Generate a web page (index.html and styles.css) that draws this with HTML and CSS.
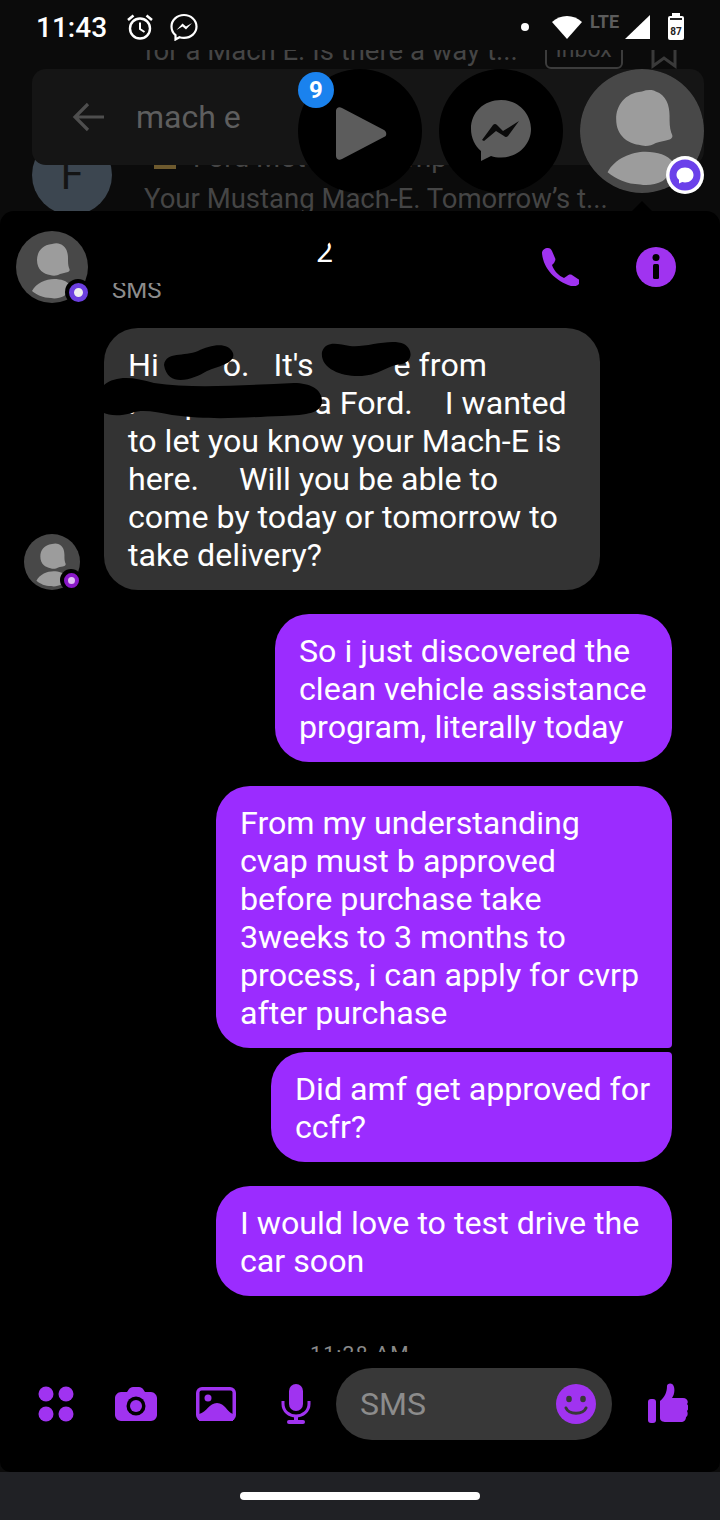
FILE: index.html
```html
<!DOCTYPE html>
<html>
<head>
	<title></title>
	<meta charset="utf-8">
	<link rel="stylesheet" href="styles.css">
</head>
<body>
    <svg class="defs" width="0" height="0">
        <symbol id="person" viewBox="0 0 72 72">
            <circle cx="36" cy="36" r="36" fill="#484848"/>
            <path d="M36 13c3-1 6-1 8 0 6 2 8 8 8 14 0 4 0 7 1 10 1 2 1 3-1 4-3 1-5 1-8 2-3 2-7 2-10 1-6-1-13-5-13-15 0-8 5-15 15-16z" fill="#9c9c9c"/>
            <path d="M16 60c4-8 14-12 22-12 7 0 13 2 16 6-1 5-3 9-6 11-4 2-9 3-13 2-8 0-14-3-19-7z" fill="#9c9c9c"/>
        </symbol>
    </svg>

    <div class="status-bar">
        <span class="clock">11:43</span>
        <svg class="st-icon alarm" viewBox="0 0 28 28" fill="none" stroke="#fff" stroke-width="2.4">
            <circle cx="14" cy="15.5" r="10"/>
            <path d="M14 9.5v6.5l4.500 3" stroke-width="2"/>
            <path d="M2 7l5.500-4.500M26 7l-5.500-4.500" stroke-width="2.600"/>
        </svg>
        <svg class="st-icon fb-small" viewBox="0 0 28 28">
            <path d="M14 2C7 2 1.500 7 1.500 13.600c0 3.500 1.500 6.500 4 8.600V26.500l4-2.200c1.400.4 2.900.6 4.500.6 7 0 12.500-5 12.500-11.300S21 2 14 2z" fill="none" stroke="#fff" stroke-width="2.200"/>
            <path d="M6.500 17l6-6.500 3.500 3 6-3.500-6 6.500-3.500-3z" fill="#fff"/>
        </svg>
        <span class="spacer"></span>
        <span class="dot"></span>
        <svg class="wifi" viewBox="0 0 30 26"><path d="M15 25L0 8C8 0 22 0 30 8z" fill="#fff"/></svg>
        <span class="lte">LTE</span>
        <svg class="signal" viewBox="0 0 25 24"><path d="M25 0v24H0z" fill="#fff"/></svg>
        <span class="battery"><span class="battery-cap"></span><span class="battery-line"></span><span class="battery-num">87</span></span>
    </div>

    <div class="backdrop">
        <div class="bg-row-top">
            <span>for a Mach E. Is there a way t...</span>
            <span class="inbox-chip">Inbox</span>
            <svg class="bookmark" viewBox="0 0 26 30" fill="none" stroke="#3a3a3a" stroke-width="3"><path d="M2 2h22v25l-11-8-11 8z"/></svg>
        </div>
        <div class="search-card">
            <svg class="back-arrow" viewBox="0 0 32 30" fill="none" stroke="#4e4e4e" stroke-width="3.200"><path d="M32 15H3M16 2L3 15l13 13"/></svg>
            <span class="search-text">mach e</span>
        </div>
        <div class="bg-row-bottom">
            <div class="f-avatar">F</div>
            <div class="bg-text">
                <div class="bg-title"><span class="bg-mark"></span>Ford Motor      Comp</div>
                <div class="bg-preview">Your Mustang Mach-E. Tomorrow’s t...</div>
            </div>
        </div>

        <!-- chat heads float over the search results -->
        <div class="chat-head play-head">
            <svg viewBox="0 0 52 53"><path d="M1 4c0-3 3-5 6-3l42 22c3 2 3 6 0 7L7 52c-3 2-6 0-6-3z" fill="#5c5c5c"/></svg>
        </div>
        <div class="chat-badge">9</div>
        <div class="chat-head fb-head">
            <svg viewBox="0 0 62 62">
                <path d="M31 0C14 0 1 12 1 29c0 9 4 17 10 22v10l10-5c3 1 6 1.500 10 1.500 17 0 30-13 30-28.500S48 0 31 0z" fill="#5c5c5c"/>
                <path d="M12 40L23 25q2-2 4 0l6 6 16-10-11 15q-2 2-4 0l-8-5-12 10z" fill="#0a0a0a"/>
            </svg>
        </div>
        <div class="chat-head person-head">
            <svg viewBox="0 0 72 72"><use href="#person"/></svg>
            <svg class="head-badge" viewBox="0 0 38 38">
                <circle cx="19" cy="19" r="19" fill="#fff"/>
                <circle cx="19" cy="19" r="15.500" fill="#6b41ea"/>
                <path d="M19 11.500c5 0 8.500 3.300 8.500 7.500s-3.500 7.500-8.500 7.500c-1 0-2 0-2.800-.4L13 27.500v-3.700c-1.600-1.300-2.500-3-2.500-4.800 0-4.200 3.500-7.500 8.500-7.500z" fill="#fff"/>
            </svg>
        </div>
        <div class="pointer"></div>
    </div>

    <div class="panel">
        <div class="thread-header">
            <div class="avatar-wrap">
                <svg class="avatar-big" viewBox="0 0 72 72"><use href="#person"/></svg>
                <span class="sms-badge"><span class="sms-badge-dot"></span></span>
            </div>
            <div class="thread-title">
                <div class="thread-name"><span class="name-left">2</span></div>
                <div class="thread-sub"><span>SMS</span></div>
            </div>
            <svg class="hd-icon phone" viewBox="0 0 38 38">
                <path d="M1 5c0-3 3-5 6-5 2 0 3 1 4 3l3 7c1 2 0 3-1 5l-2 2c2 6 7 11 12 13l3-2c1-1 3-2 5-1l6 4c2 1 2 3 1 5-2 2-5 3-8 2C14 33 2 20 1 5z" fill="#a033f0"/>
            </svg>
            <svg class="hd-icon info" viewBox="0 0 40 40">
                <circle cx="20" cy="20" r="20" fill="#a033f0"/>
                <circle cx="20" cy="10.500" r="3.500" fill="#000"/>
                <rect x="17" y="17" width="6" height="15" rx="1.500" fill="#000"/>
            </svg>
        </div>

        <div class="message-list">
            <div class="row-in">
                <div class="small-avatar">
                    <svg viewBox="0 0 72 72"><use href="#person"/></svg>
                    <span class="mini-badge"><span class="mini-badge-dot"></span></span>
                </div>
                <div class="bubble bubble-in">
                    <div class="bubble-text">Hi        o.   It's          e from
.      p              a Ford.    I wanted
to let you know your Mach-E is
here.     Will you be able to
come by today or tomorrow to
take delivery?</div>
                    <svg class="scribble scribble-a" viewBox="0 0 72 40"><path d="M2 22C4 8 22 14 36 8 48 2 66-2 71 10c3 10-14 13-26 18C32 36 6 46 2 22z" fill="#000"/></svg>
                    <svg class="scribble scribble-b" viewBox="0 0 92 36"><path d="M2 10c4-12 16-8 28-6 16 2 40-8 54-2 10 6 8 18-2 20-18 2-22 12-44 12C20 34 0 26 2 10z" fill="#000"/></svg>
                    <svg class="scribble scribble-c" viewBox="0 0 218 42"><path d="M0 8C12-2 30 0 50 6c40 6 90 2 140 0 16 0 28 6 28 18 0 12-14 14-40 15-50 2-70 4-110-1-16-3-30-6-40-2C14 40 4 38 0 36z" fill="#000"/></svg>
                </div>
            </div>

            <div class="bubble bubble-out w-first">So i just discovered the
clean vehicle assistance
program, literally today</div>
            <div class="bubble bubble-out w-full group-top">From my understanding
cvap must b approved
before purchase take
3weeks to 3 months to
process, i can apply for cvrp
after purchase</div>
            <div class="bubble bubble-out w-third group-bottom">Did amf get approved for
ccfr?</div>
            <div class="bubble bubble-out w-full">I would love to test drive the
car soon</div>
            <div class="timestamp">11:28 AM</div>
        </div>

        <div class="composer">
            <div class="tool">
                <svg class="apps" viewBox="0 0 36 36" fill="#a033f0"><circle cx="8" cy="8" r="7.500"/><circle cx="28" cy="8" r="7.500"/><circle cx="8" cy="28" r="7.500"/><circle cx="28" cy="28" r="7.500"/></svg>
            </div>
            <div class="tool">
                <svg class="camera" viewBox="0 0 42 34"><path d="M6 5h6l2-3c1-1 2-2 4-2h6c2 0 3 1 4 2l2 3h6c3 0 6 3 6 6v17c0 3-3 6-6 6H6c-3 0-6-3-6-6V11c0-3 3-6 6-6z" fill="#a033f0"/><circle cx="21" cy="19" r="9.500" fill="#000"/><circle cx="21" cy="19" r="6" fill="#a033f0"/></svg>
            </div>
            <div class="tool">
                <svg class="picture" viewBox="0 0 40 34"><rect width="40" height="34" rx="6" fill="#a033f0"/><rect x="3.500" y="3.500" width="33" height="27" rx="2" fill="#000"/><circle cx="12" cy="11" r="3.500" fill="#a033f0"/><path d="M3 27c8-2 10-11 18-11s10 9 16 11v7H3z" fill="#a033f0"/></svg>
            </div>
            <div class="tool">
                <svg class="mic" viewBox="0 0 30 40"><rect x="8" y="0" width="14" height="27" rx="7" fill="#a033f0"/><path d="M2 17v3c0 7 6 12 13 12s13-5 13-12v-3" fill="none" stroke="#a033f0" stroke-width="3"/><rect x="13" y="31" width="4" height="7" fill="#a033f0"/><rect x="6" y="36" width="18" height="4" rx="2" fill="#a033f0"/></svg>
            </div>
            <div class="input-pill">
                <span class="input-text">SMS</span>
                <svg class="smile" viewBox="0 0 40 40"><circle cx="20" cy="20" r="20" fill="#a033f0"/><ellipse cx="13" cy="15" rx="2.800" ry="3.200" fill="#383838"/><ellipse cx="27" cy="15" rx="2.800" ry="3.200" fill="#383838"/><path d="M10 24c3 7 17 7 20 0" fill="none" stroke="#383838" stroke-width="3" stroke-linecap="round"/></svg>
            </div>
            <svg class="thumb" viewBox="0 0 40 40"><rect x="0" y="16" width="8" height="24" rx="3" fill="#a033f0"/><path d="M12 18c5-4 7-9 7-15 0-3 6-4 7 1 1 4 0 8-2 11h11c4 0 6 4 4 6 2 2 2 5 0 7 1 2 1 5-1 6 0 3-2 5-5 5H18c-3 0-6-1-6-4z" fill="#a033f0"/></svg>
        </div>
    </div>

    <div class="nav-bar"><span class="nav-pill"></span></div>
</body>
</html>
```

FILE: styles.css
```css
* {
    box-sizing: border-box;
}
body {
    margin: 0;
    width: 720px;
    height: 1520px;
    background-color: #0b0b0b;
    display: flex;
    flex-direction: column;
    overflow: hidden;
    font-family: Roboto, "Liberation Sans", sans-serif;
    color: #fff;
}
.defs {
    position: absolute;
}

/* status bar */
.status-bar {
    height: 50px;
    flex: none;
    display: flex;
    align-items: center;
    padding: 4px 36px 0 36px;
}
.clock {
    font-size: 28px;
    font-weight: 500;
    width: 90px;
}
.st-icon {
    width: 28px;
    height: 28px;
}
.fb-small {
    margin-left: 16px;
}
.spacer {
    flex: 1;
}
.dot {
    width: 8px;
    height: 8px;
    border-radius: 50%;
    background-color: #fff;
}
.wifi {
    width: 30px;
    height: 26px;
    margin-left: 23px;
}
.lte {
    font-size: 18px;
    font-weight: 700;
    color: #5c5c5c;
    width: 34px;
    margin: -12px 0 0 8px;
}
.signal {
    width: 25px;
    height: 24px;
    margin-left: 1px;
}
.battery {
    position: relative;
    width: 16px;
    height: 24px;
    margin: 2px 0 0 18px;
    background-color: #fff;
    border-radius: 2px;
    display: flex;
    align-items: flex-end;
    justify-content: center;
}
.battery-cap {
    position: absolute;
    top: -3px;
    left: 4px;
    width: 8px;
    height: 3px;
    background-color: #fff;
}
.battery-line {
    position: absolute;
    top: 2px;
    left: 2px;
    right: 2px;
    height: 2px;
    background-color: #222;
}
.battery-num {
    font-size: 10px;
    font-weight: 700;
    color: #222;
    line-height: 17px;
}

/* dimmed screen behind the bubble */
.backdrop {
    position: relative;
    height: 161px;
    flex: none;
    overflow: hidden;
    color: #454545;
}
.bg-row-top {
    height: 19px;
    display: flex;
    align-items: flex-end;
    padding-left: 144px;
    font-size: 27.500px;
    line-height: 36px;
    overflow: hidden;
}
.inbox-chip {
    margin-left: 27px;
    width: 78px;
    height: 32px;
    flex: none;
    border: 2px solid #3c3c3c;
    border-radius: 6px;
    font-size: 23px;
    line-height: 22px;
    text-align: center;
}
.bookmark {
    width: 26px;
    height: 30px;
    margin-left: 28px;
    flex: none;
}
.search-card {
    height: 96px;
    margin: 0 16px 0 32px;
    background-color: #151515;
    border-radius: 14px;
    display: flex;
    align-items: center;
    padding-left: 40px;
    position: relative;
    z-index: 1;
}
.back-arrow {
    width: 32px;
    height: 30px;
}
.search-text {
    font-size: 32px;
    color: #5e5e5e;
    margin-left: 32px;
}
.bg-row-bottom {
    display: flex;
    padding-left: 32px;
    margin-top: -30px;
}
.f-avatar {
    width: 80px;
    height: 80px;
    flex: none;
    border-radius: 50%;
    background-color: #3c4650;
    color: #141414;
    font-size: 42px;
    text-align: center;
    line-height: 80px;
}
.bg-text {
    margin: 6px 0 0 32px;
}
.bg-title {
    height: 34px;
    font-size: 28px;
    line-height: 34px;
    white-space: pre;
}
.bg-mark {
    display: inline-block;
    width: 22px;
    height: 6px;
    margin: 0 17px 0 10px;
    vertical-align: -2px;
    background-color: #6e5a2e;
}
.bg-preview {
    font-size: 27.500px;
    margin-top: 7px;
    line-height: 34px;
    white-space: nowrap;
}
.chat-head {
    position: absolute;
    top: 19px;
    width: 124px;
    height: 124px;
    border-radius: 50%;
    background-color: #000;
    z-index: 2;
    display: flex;
    align-items: center;
    justify-content: center;
}
.play-head {
    left: 298px;
}
.play-head svg {
    width: 52px;
    height: 53px;
    margin: 4px 0 0 2px;
}
.fb-head {
    left: 439px;
}
.fb-head svg {
    width: 62px;
    height: 62px;
}
.person-head {
    left: 580px;
}
.person-head > svg:first-child {
    width: 124px;
    height: 124px;
}
.chat-badge {
    position: absolute;
    left: 298px;
    top: 22px;
    width: 36px;
    height: 36px;
    border-radius: 50%;
    background-color: #1a82ee;
    color: #fff;
    font-size: 24px;
    font-weight: 700;
    line-height: 36px;
    text-align: center;
    z-index: 3;
}
.head-badge {
    position: absolute;
    right: 0;
    bottom: -1px;
    width: 38px;
    height: 38px;
}
.pointer {
    position: absolute;
    left: 632px;
    bottom: 0;
    width: 0;
    height: 0;
    border-left: 10px solid transparent;
    border-right: 10px solid transparent;
    border-bottom: 10px solid #000;
}

/* messenger panel */
.panel {
    height: 1261px;
    flex: none;
    background-color: #000;
    border-radius: 14px 14px 10px 10px;
    display: flex;
    flex-direction: column;
}
.thread-header {
    height: 117px;
    flex: none;
    display: flex;
    padding: 20px 44px 0 16px;
}
.avatar-wrap {
    position: relative;
    width: 72px;
    height: 72px;
    flex: none;
}
.avatar-big {
    width: 72px;
    height: 72px;
}
.sms-badge {
    position: absolute;
    right: -3px;
    bottom: -2px;
    width: 26px;
    height: 26px;
    border-radius: 50%;
    background-color: #000;
    display: flex;
    align-items: center;
    justify-content: center;
}
.sms-badge-dot {
    width: 19px;
    height: 19px;
    border-radius: 50%;
    border: 5px solid #6c3fe0;
    background-color: #eee;
}
.thread-title {
    flex: 1;
    padding-left: 24px;
}
/* both lines are cut at the top by the scribble in the original */
.thread-name {
    height: 27px;
    padding-left: 204px;
    margin-top: 9px;
    overflow: hidden;
    display: flex;
    align-items: flex-end;
    font-size: 30px;
    line-height: 30px;
}
.name-left {
    clip-path: polygon(10px 10px, 17px 0, 17px 30px, 0 30px, 0 20px);
}
.thread-sub {
    height: 19px;
    margin-top: 16px;
    overflow: hidden;
    display: flex;
    align-items: flex-end;
    color: #8c8c8c;
    font-size: 24px;
    line-height: 24px;
}
.hd-icon {
    flex: none;
}
.phone {
    width: 38px;
    height: 38px;
    margin-top: 17px;
}
.info {
    width: 40px;
    height: 40px;
    margin: 16px 0 0 57px;
}

/* messages */
.message-list {
    flex: 1;
    height: 0;
    overflow: hidden;
    display: flex;
    flex-direction: column;
    align-items: flex-end;
    padding-right: 48px;
}
.row-in {
    align-self: flex-start;
    display: flex;
    align-items: flex-end;
    padding-left: 24px;
}
.small-avatar {
    position: relative;
    width: 56px;
    height: 56px;
    margin-right: 24px;
    flex: none;
}
.small-avatar svg {
    width: 56px;
    height: 56px;
}
.mini-badge {
    position: absolute;
    right: -2px;
    bottom: -1px;
    width: 22px;
    height: 22px;
    border-radius: 50%;
    background-color: #000;
    display: flex;
    align-items: center;
    justify-content: center;
}
.mini-badge-dot {
    width: 15px;
    height: 15px;
    border-radius: 50%;
    border: 4px solid #8a18c8;
    background-color: #e0c0f4;
}
.bubble {
    position: relative;
    border-radius: 34px;
    padding: 18px 24px 16px;
    font-size: 32.200px;
    line-height: 38px;
    white-space: pre;
    margin-top: 24px;
    flex: none;
    background-color: #9b2cff;
}
.bubble-in {
    background-color: #333;
    width: 496px;
    margin-top: 0;
    white-space: normal;
}
.bubble-text {
    white-space: pre;
}
.w-first {
    width: 397px;
}
.w-full {
    width: 456px;
}
.w-third {
    width: 401px;
}
.group-top {
    border-bottom-right-radius: 4px;
}
.group-bottom {
    margin-top: 4px;
    border-top-right-radius: 4px;
}
.scribble {
    position: absolute;
}
.scribble-a {
    left: 58px;
    top: 15px;
    width: 72px;
    height: 40px;
}
.scribble-b {
    left: 216px;
    top: 14px;
    width: 92px;
    height: 36px;
}
.scribble-c {
    left: 0;
    top: 49px;
    width: 218px;
    height: 42px;
}
.timestamp {
    align-self: center;
    margin: 46px -48px 0 0;
    height: 24px;
    flex: none;
    font-size: 21px;
    line-height: 24px;
    letter-spacing: 1.300px;
    color: #8a8a8a;
}

/* composer */
.composer {
    height: 120px;
    flex: none;
    display: flex;
    align-items: flex-start;
    padding: 16px 0 0 16px;
}
.tool {
    width: 80px;
    height: 72px;
    flex: none;
    display: flex;
    align-items: center;
    justify-content: center;
}
.apps {
    width: 36px;
    height: 36px;
}
.camera {
    width: 42px;
    height: 34px;
}
.picture {
    width: 40px;
    height: 34px;
}
.mic {
    width: 30px;
    height: 40px;
}
.input-pill {
    width: 276px;
    height: 72px;
    flex: none;
    border-radius: 36px;
    background-color: #383838;
    display: flex;
    align-items: center;
    justify-content: space-between;
    padding: 0 16px 0 24px;
}
.input-text {
    font-size: 32px;
    color: #8c8c8c;
}
.smile {
    width: 40px;
    height: 40px;
}
.thumb {
    width: 40px;
    height: 40px;
    margin: 15px 0 0 36px;
    flex: none;
}

/* android nav bar */
.nav-bar {
    flex: 1;
    background-color: #202125;
    display: flex;
    align-items: flex-start;
    justify-content: center;
    padding-top: 20px;
}
.nav-pill {
    width: 240px;
    height: 8px;
    border-radius: 4px;
    background-color: #fff;
}
```
